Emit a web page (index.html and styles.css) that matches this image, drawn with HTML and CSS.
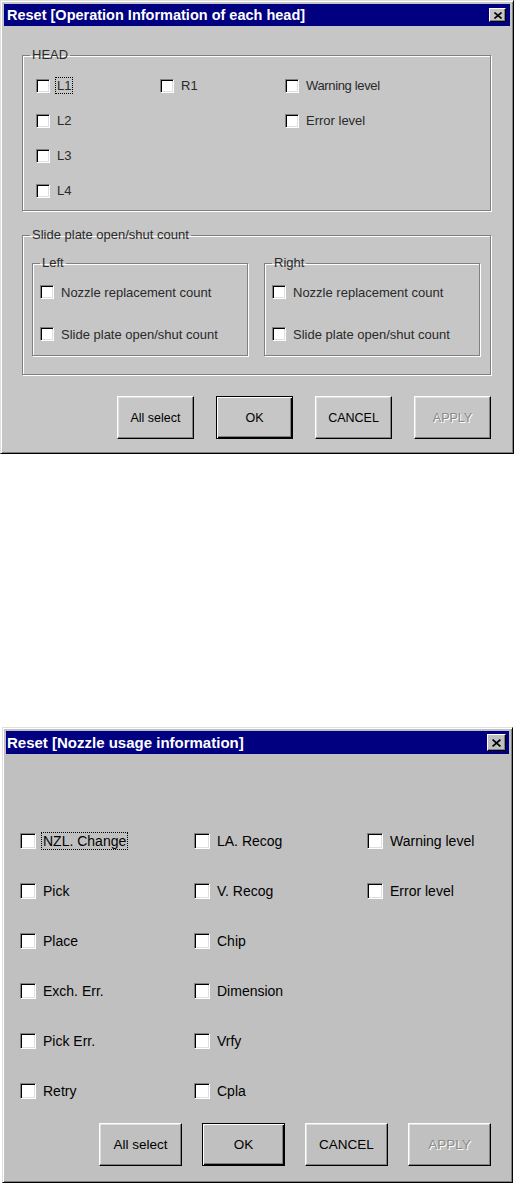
FILE: index.html
```html
<html>
<head>
	<title>Reset dialogs</title>
	<link rel="stylesheet" href="styles.css">
</head>
<body>

	<div class="window head-dialog">
		<div class="titlebar">
			<span class="title">Reset [Operation Information of each head]</span>
			<span class="close"><svg viewBox="0 0 8 7" width="8" height="7"><path d="M0.5 0.5 L7.5 6.5 M7.5 0.5 L0.5 6.5" stroke="#000" stroke-width="1.6" fill="none"/></svg></span>
		</div>
		<div class="content">
			<fieldset class="group">
				<legend>HEAD</legend>
				<div class="head-grid">
					<label class="item"><span class="check"></span><span class="focus">L1</span></label>
					<label class="item"><span class="check"></span>R1</label>
					<label class="item"><span class="check"></span><span class="tight">Warning level</span></label>
					<label class="item"><span class="check"></span>L2</label>
					<span></span>
					<label class="item"><span class="check"></span>Error level</label>
					<label class="item"><span class="check"></span>L3</label>
					<span></span>
					<span></span>
					<label class="item"><span class="check"></span>L4</label>
				</div>
			</fieldset>

			<fieldset class="group slide-group">
				<legend>Slide plate open/shut count</legend>
				<div class="sides">
					<fieldset class="group side">
						<legend>Left</legend>
						<div class="side-rows">
							<label class="item"><span class="check"></span>Nozzle replacement count</label>
							<label class="item"><span class="check"></span>Slide plate open/shut count</label>
						</div>
					</fieldset>
					<fieldset class="group side">
						<legend>Right</legend>
						<div class="side-rows">
							<label class="item"><span class="check"></span>Nozzle replacement count</label>
							<label class="item"><span class="check"></span>Slide plate open/shut count</label>
						</div>
					</fieldset>
				</div>
			</fieldset>

			<div class="buttons">
				<button class="btn">All select</button>
				<button class="btn default">OK</button>
				<button class="btn">CANCEL</button>
				<button class="btn" disabled>APPLY</button>
			</div>
		</div>
	</div>

	<div class="window nozzle-dialog">
		<div class="titlebar">
			<span class="title">Reset [Nozzle usage information]</span>
			<span class="close"><svg viewBox="0 0 8 7" width="9" height="8"><path d="M0.5 0.5 L7.5 6.5 M7.5 0.5 L0.5 6.5" stroke="#000" stroke-width="1.6" fill="none"/></svg></span>
		</div>
		<div class="content">
			<div class="nozzle-grid">
				<label class="item"><span class="check"></span><span class="focus">NZL. Change</span></label>
				<label class="item"><span class="check"></span>LA. Recog</label>
				<label class="item"><span class="check"></span>Warning level</label>
				<label class="item"><span class="check"></span>Pick</label>
				<label class="item"><span class="check"></span>V. Recog</label>
				<label class="item"><span class="check"></span>Error level</label>
				<label class="item"><span class="check"></span>Place</label>
				<label class="item"><span class="check"></span>Chip</label>
				<span></span>
				<label class="item"><span class="check"></span>Exch. Err.</label>
				<label class="item"><span class="check"></span>Dimension</label>
				<span></span>
				<label class="item"><span class="check"></span>Pick Err.</label>
				<label class="item"><span class="check"></span>Vrfy</label>
				<span></span>
				<label class="item"><span class="check"></span>Retry</label>
				<label class="item"><span class="check"></span>Cpla</label>
			</div>

			<div class="buttons">
				<button class="btn">All select</button>
				<button class="btn default">OK</button>
				<button class="btn">CANCEL</button>
				<button class="btn" disabled>APPLY</button>
			</div>
		</div>
	</div>

</body>
</html>
```

FILE: styles.css
```css
body {
	margin: 0;
	background-color: #fff;
	font-family: "Liberation Sans", Arial, sans-serif;
}

/* classic raised window frame */
.window {
	box-sizing: border-box;
	background-color: #c0c0c0;
	border: 1px solid;
	border-color: #dfdfdf #000 #000 #dfdfdf;
	box-shadow: inset 1px 1px 0 #fff, inset -1px -1px 0 #808080;
	padding: 3px;
}

.titlebar {
	display: flex;
	align-items: center;
	justify-content: space-between;
	background-color: #000080;
	color: #fff;
	font-weight: bold;
	white-space: nowrap;
}

.close {
	display: flex;
	align-items: center;
	justify-content: center;
	box-sizing: border-box;
	background-color: #c0c0c0;
	border: 1px solid;
	border-color: #fff #000 #000 #fff;
	box-shadow: inset -1px -1px 0 #808080;
}

.item {
	display: flex;
	align-items: center;
	white-space: nowrap;
}

.check {
	box-sizing: border-box;
	flex: none;
	background-color: #fff;
	border: 1px solid;
	border-color: #808080 #fff #fff #808080;
	box-shadow: inset 1px 1px 0 #000, inset -1px -1px 0 #dfdfdf;
}

.focus {
	border: 1px dotted #000;
	padding: 0 1px;
	margin-left: -2px;
}

.buttons {
	display: flex;
	justify-content: flex-end;
}

.btn {
	box-sizing: border-box;
	background-color: #c0c0c0;
	border: 1px solid;
	border-color: #fff #000 #000 #fff;
	box-shadow: inset -1px -1px 0 #808080, inset 1px 1px 0 #dfdfdf;
	font-family: "Liberation Sans", Arial, sans-serif;
	color: #000;
	padding: 0;
}

.btn.default {
	border: 1px solid #000;
	box-shadow: inset 1px 1px 0 #fff, inset -1px -1px 0 #000, inset -2px -2px 0 #808080;
}

.btn:disabled {
	color: #8a8a8a;
	text-shadow: 1px 1px 0 #fff;
}

/* etched group box */
.group {
	margin: 0;
	padding: 0;
	min-width: 0;
	border: 1px solid #808080;
	box-shadow: 1px 1px 0 #fff, inset 1px 1px 0 #fff;
}

.group legend {
	margin-left: 7px;
	padding: 0 2px;
	line-height: 14px;
	background-color: inherit;
}

/* operation information of each head */
.head-dialog {
	width: 514px;
	background-color: #c6c6c6;
	color: #2a2a2a;
	font-size: 13px;
}

.head-dialog .titlebar {
	height: 22px;
	padding-left: 3px;
	font-size: 14.5px;
}

.head-dialog .close {
	width: 17px;
	height: 14px;
	margin-right: 4px;
	background-color: #c6c6c6;
}

.head-dialog .content {
	padding: 22px 19px 11px 18px;
}

.head-dialog .check {
	width: 14px;
	height: 14px;
	margin-right: 7px;
}

.head-grid {
	display: grid;
	grid-template-columns: 124px 125px 1fr;
	grid-auto-rows: 35px;
	padding: 6px 0 2px 13px;
}

.tight {
	letter-spacing: -0.35px;
}

.slide-group {
	margin-top: 17px;
}

.sides {
	display: flex;
	gap: 16px;
	padding: 14px 10px 18px 9px;
}

.side {
	flex: 1;
}

.side-rows {
	display: grid;
	grid-auto-rows: 42px;
	padding: 1px 0 0 7px;
}

.head-dialog .buttons {
	margin-top: 21px;
	gap: 22px;
}

.head-dialog .btn {
	width: 77px;
	height: 43px;
	font-size: 12.5px;
	background-color: #c6c6c6;
}

/* nozzle usage information */
.nozzle-dialog {
	width: 511px;
	margin: 273px 0 0 2px;
	font-size: 14px;
	color: #000;
}

.nozzle-dialog .titlebar {
	height: 23px;
	padding-left: 1px;
	font-size: 15px;
}

.nozzle-dialog .close {
	width: 19px;
	height: 17px;
	margin-right: 3px;
}

.nozzle-dialog .content {
	padding: 62px 18px 13px 14px;
}

.nozzle-dialog .check {
	width: 16px;
	height: 16px;
	margin-right: 7px;
}

.nozzle-grid {
	display: grid;
	grid-template-columns: 174px 173px 1fr;
	grid-auto-rows: 50px;
}

.nozzle-dialog .buttons {
	margin-top: 7px;
	gap: 20px;
}

.nozzle-dialog .btn {
	width: 83px;
	height: 43px;
	font-size: 13.5px;
}
```
